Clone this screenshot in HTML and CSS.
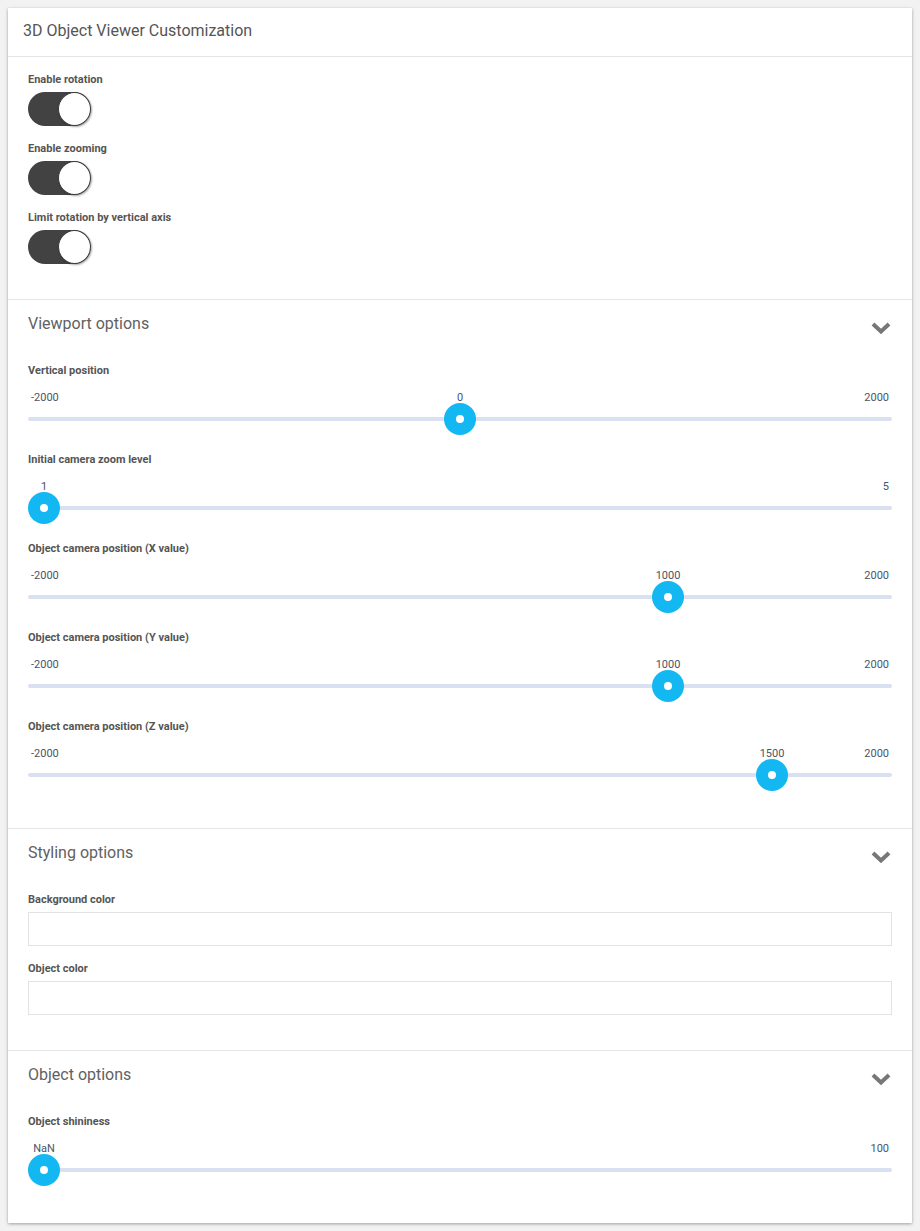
FILE: index.html
```html
<!DOCTYPE html>
<html>
<head>
<meta charset="utf-8">
<title>3D Object Viewer Customization</title>
<link rel="stylesheet" href="styles.css">
</head>
<body>
<div class="card">
  <div class="card-header">3D Object Viewer Customization</div>

  <div class="section section-toggles">
    <div class="field">
      <div class="label">Enable rotation</div>
      <div class="toggle"><span class="knob"></span></div>
    </div>
    <div class="field">
      <div class="label">Enable zooming</div>
      <div class="toggle"><span class="knob"></span></div>
    </div>
    <div class="field">
      <div class="label">Limit rotation by vertical axis</div>
      <div class="toggle"><span class="knob"></span></div>
    </div>
  </div>

  <div class="section">
    <div class="section-head">
      <span class="section-title">Viewport options</span>
      <svg class="chevron" width="20" height="12" viewBox="0 0 20 12"><polyline points="2,2 10,9.5 18,2" fill="none" stroke="#777" stroke-width="4"/></svg>
    </div>
    <div class="fields sliders">
      <div class="slider-field">
        <div class="label">Vertical position</div>
        <div class="values"><span class="min">-2000</span><span class="cur" style="left: calc(16px + (100% - 32px) * 0.5)">0</span><span class="max">2000</span></div>
        <div class="track"><span class="thumb" style="left: calc(16px + (100% - 32px) * 0.5)"></span></div>
      </div>
      <div class="slider-field">
        <div class="label">Initial camera zoom level</div>
        <div class="values"><span class="min"></span><span class="cur" style="left: calc(16px + (100% - 32px) * 0)">1</span><span class="max">5</span></div>
        <div class="track"><span class="thumb" style="left: calc(16px + (100% - 32px) * 0)"></span></div>
      </div>
      <div class="slider-field">
        <div class="label">Object camera position (X value)</div>
        <div class="values"><span class="min">-2000</span><span class="cur" style="left: calc(16px + (100% - 32px) * 0.75)">1000</span><span class="max">2000</span></div>
        <div class="track"><span class="thumb" style="left: calc(16px + (100% - 32px) * 0.75)"></span></div>
      </div>
      <div class="slider-field">
        <div class="label">Object camera position (Y value)</div>
        <div class="values"><span class="min">-2000</span><span class="cur" style="left: calc(16px + (100% - 32px) * 0.75)">1000</span><span class="max">2000</span></div>
        <div class="track"><span class="thumb" style="left: calc(16px + (100% - 32px) * 0.75)"></span></div>
      </div>
      <div class="slider-field">
        <div class="label">Object camera position (Z value)</div>
        <div class="values"><span class="min">-2000</span><span class="cur" style="left: calc(16px + (100% - 32px) * 0.875)">1500</span><span class="max">2000</span></div>
        <div class="track"><span class="thumb" style="left: calc(16px + (100% - 32px) * 0.875)"></span></div>
      </div>
    </div>
  </div>

  <div class="section">
    <div class="section-head">
      <span class="section-title">Styling options</span>
      <svg class="chevron" width="20" height="12" viewBox="0 0 20 12"><polyline points="2,2 10,9.5 18,2" fill="none" stroke="#777" stroke-width="4"/></svg>
    </div>
    <div class="fields inputs">
      <div class="field">
        <div class="label">Background color</div>
        <div class="text-input"></div>
      </div>
      <div class="field">
        <div class="label">Object color</div>
        <div class="text-input"></div>
      </div>
    </div>
  </div>

  <div class="section">
    <div class="section-head">
      <span class="section-title">Object options</span>
      <svg class="chevron" width="20" height="12" viewBox="0 0 20 12"><polyline points="2,2 10,9.5 18,2" fill="none" stroke="#777" stroke-width="4"/></svg>
    </div>
    <div class="fields sliders">
      <div class="slider-field">
        <div class="label">Object shininess</div>
        <div class="values"><span class="min"></span><span class="cur" style="left: calc(16px + (100% - 32px) * 0)">NaN</span><span class="max">100</span></div>
        <div class="track"><span class="thumb" style="left: calc(16px + (100% - 32px) * 0)"></span></div>
      </div>
    </div>
  </div>
</div>
</body>
</html>
```

FILE: styles.css
```css
* { box-sizing: border-box; }

body {
  margin: 0;
  background: #f2f2f2;
  font-family: Roboto, "Liberation Sans", Arial, sans-serif;
  color: #555;
}

.card {
  margin: 8px;
  width: 904px;
  background: #fff;
  box-shadow: 0 1px 3px rgba(0, 0, 0, 0.35);
}

.card-header {
  height: 49px;
  padding: 0 15px;
  display: flex;
  align-items: center;
  padding-bottom: 3px;
  font-size: 16px;
  color: #555;
  border-bottom: 1px solid #e6e6e6;
}

.section {
  padding: 0 20px;
  border-top: 1px solid #e6e6e6;
}

.card-header + .section { border-top: none; }

.section-toggles {
  padding-top: 15px;
  padding-bottom: 35px;
  display: flex;
  flex-direction: column;
  gap: 15px;
}

.field {
  display: flex;
  flex-direction: column;
  align-items: flex-start;
  gap: 5px;
}

.label {
  font-size: 11px;
  font-weight: 700;
  line-height: 15px;
  height: 15px;
  color: #555;
}

.toggle {
  width: 62px;
  height: 34px;
  border-radius: 17px;
  background: #424242;
  display: flex;
  justify-content: flex-end;
  align-items: center;
}

.knob {
  width: 33px;
  height: 34px;
  border-radius: 50%;
  background: #fff;
  border: 1px solid #3a3a3a;
  box-shadow: 1px 1px 2px rgba(0, 0, 0, 0.35);
  margin-right: -1px;
}

.section-head {
  height: 48px;
  padding-bottom: 2px;
  display: flex;
  align-items: center;
  justify-content: space-between;
}

.section-title {
  font-size: 16px;
  color: #616161;
}

.chevron {
  margin-top: 10px;
  margin-right: 1px;
}

.fields {
  padding-top: 15px;
  display: flex;
  flex-direction: column;
}

.sliders {
  gap: 18px;
  padding-bottom: 38px;
}

.inputs {
  gap: 15px;
  padding-bottom: 35px;
}

.slider-field {
  display: flex;
  flex-direction: column;
}

.values {
  position: relative;
  margin-top: 13px;
  height: 13px;
  line-height: 14px;
  font-size: 11px;
  color: #4a5468;
  display: flex;
  justify-content: space-between;
  padding: 0 3px;
}

.values .cur {
  position: absolute;
  top: 0;
  transform: translateX(-50%);
}

.track {
  position: relative;
  height: 30px;
}

.track::before {
  content: "";
  position: absolute;
  left: 0;
  right: 0;
  top: 13px;
  height: 4px;
  border-radius: 2px;
  background: #d8e0f2;
}

.thumb {
  position: absolute;
  top: -1px;
  width: 32px;
  height: 32px;
  margin-left: -16px;
  border-radius: 50%;
  background: #13b7f1;
  display: flex;
  align-items: center;
  justify-content: center;
}

.thumb::after {
  content: "";
  width: 8px;
  height: 8px;
  border-radius: 50%;
  background: #fff;
}

.text-input {
  width: 100%;
  height: 34px;
  border: 1px solid #e2e2e2;
  background: #fff;
}
```
